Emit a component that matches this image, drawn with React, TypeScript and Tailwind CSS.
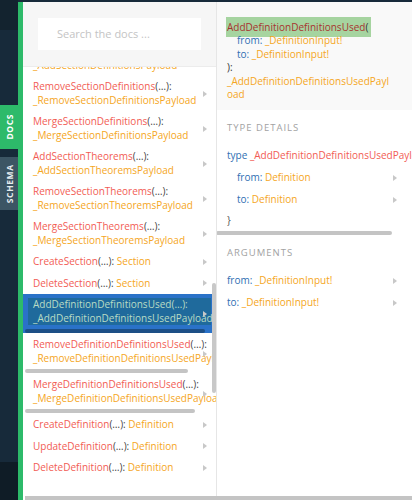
import type { ReactNode } from 'react';

type Item = {
  name: string;
  type: string;
  wrap?: boolean;
  bar?: number;
  selected?: boolean;
};

const items: Item[] = [
  { name: 'AddSectionDefinitions', type: '_AddSectionDefinitionsPayload', wrap: true },
  { name: 'RemoveSectionDefinitions', type: '_RemoveSectionDefinitionsPayload', wrap: true },
  { name: 'MergeSectionDefinitions', type: '_MergeSectionDefinitionsPayload', wrap: true },
  { name: 'AddSectionTheorems', type: '_AddSectionTheoremsPayload', wrap: true },
  { name: 'RemoveSectionTheorems', type: '_RemoveSectionTheoremsPayload', wrap: true },
  { name: 'MergeSectionTheorems', type: '_MergeSectionTheoremsPayload', wrap: true },
  { name: 'CreateSection', type: 'Section' },
  { name: 'DeleteSection', type: 'Section' },
  { name: 'AddDefinitionDefinitionsUsed', type: '_AddDefinitionDefinitionsUsedPayload', wrap: true, bar: 180, selected: true },
  { name: 'RemoveDefinitionDefinitionsUsed', type: '_RemoveDefinitionDefinitionsUsedPayload', wrap: true, bar: 163 },
  { name: 'MergeDefinitionDefinitionsUsed', type: '_MergeDefinitionDefinitionsUsedPayload', wrap: true, bar: 170 },
  { name: 'CreateDefinition', type: 'Definition' },
  { name: 'UpdateDefinition', type: 'Definition' },
  { name: 'DeleteDefinition', type: 'Definition' },
];

function Arrow({ className = '' }: { className?: string }) {
  return (
    <svg viewBox="0 0 4 6" className={`h-[6px] w-[4px] ${className}`}>
      <path d="M0 0 L4 3 L0 6 Z" fill="#c8c8c8" />
    </svg>
  );
}

function ListItem({ item }: { item: Item }) {
  const sel = item.selected;
  return (
    <div className={`relative ${sel ? 'bg-[#2a72c8]' : ''}`}>
      <div className="px-[10px] py-[4px]">
        <div className={`whitespace-nowrap ${sel ? 'mx-[-5px] bg-[#1f6a9c] px-[5px]' : ''}`}>
          <div>
            <span className={sel ? 'text-[#b9dcc4]' : 'text-[#f25c54]'}>{item.name}</span>
            <span className={sel ? 'text-[#b9dcc4]' : 'text-[#444]'}>(…):</span>
            {!item.wrap && <span className="text-[#f5a623]"> {item.type}</span>}
          </div>
          {item.wrap && <div className={sel ? 'text-[#b9dcc4]' : 'text-[#f5a623]'}>{item.type}</div>}
        </div>
      </div>
      <Arrow className="absolute right-[9px] top-1/2 -mt-[3px]" />
      {item.bar && (
        <div
          className={`mb-[1px] ml-[2px] h-[4px] rounded-full ${sel ? 'bg-[#1c4f86]' : 'bg-[#c4c4c4]'}`}
          style={{ width: item.bar }}
        />
      )}
    </div>
  );
}

function Line({ children, indent = false, arrow = false, short = false }: { children: ReactNode; indent?: boolean; arrow?: boolean; short?: boolean }) {
  return (
    <div className={`relative flex items-center whitespace-nowrap ${short ? 'h-[20px]' : 'h-[22px]'} ${indent ? 'pl-[10px]' : ''}`}>
      {children}
      {arrow && <Arrow className="absolute right-[5px] top-1/2 -mt-[3px]" />}
    </div>
  );
}

export default function App() {
  return (
    <div className="flex h-[500px] w-[412px] overflow-hidden bg-[#172a3a] font-['Open_Sans',sans-serif] text-[10px] leading-[13.5px]">
      {/* sidebar */}
      <div className="flex w-[18px] flex-col">
        <div className="h-[30px] bg-[#13232f]" />
        <div className="h-[75px]" />
        <div className="flex h-[44px] w-[20px] items-center justify-center bg-[#2dba6a]">
          <span className="-rotate-90 text-[8.5px] font-bold tracking-[0.6px] text-white">DOCS</span>
        </div>
        <div className="h-[8px]" />
        <div className="flex h-[53px] items-center justify-center bg-[#3c5564]">
          <span className="-rotate-90 text-[8.5px] font-bold tracking-[0.6px] text-[#e6ecef]">SCHEMA</span>
        </div>
        <div className="flex-1" />
        <div className="h-[38px] bg-[#0f1c26]" />
      </div>
      <div className="mt-[2px] w-[5px] bg-[#2dba6a]" />

      <div className="mt-[2px] flex flex-1 flex-col bg-white">
        <div className="flex min-h-0 flex-1">
          {/* left docs list */}
          <div className="relative flex w-[193px] flex-col">
            <div className="h-[65px] shrink-0 border-b border-[#ececec] bg-[#f6f6f6] px-[15px] pt-[16px]">
              <div className="flex h-[32px] items-center bg-white pl-[19px] text-[11px] text-[#c4c4c4]">
                Search the docs ...
              </div>
            </div>
            <div className="min-h-0 flex-1 overflow-hidden">
              <div className="-mt-[26px]">
                {items.map((it) => (
                  <ListItem key={it.name} item={it} />
                ))}
              </div>
            </div>
            <div className="absolute right-[0px] top-[281px] h-[110px] w-[4px] rounded-full bg-[#c8c8c8]" />
          </div>

          {/* right detail */}
          <div className="flex w-[196px] flex-col overflow-hidden border-l border-[#e6e6e6]">
            <div className="bg-[#f9f9f9] px-[10px] pb-[8px] pt-[15px]">
              <div className="whitespace-nowrap">
                <span className="-ml-[1px] inline-block h-[20px] bg-[#a6d4a0] pl-[1px] pr-[3px] leading-[20px] text-[#a8332f]">
                  AddDefinitionDefinitionsUsed<span className="text-[#333]">(</span>
                </span>
              </div>
              <div className="-mt-[3px] pl-[10px]">
                <span className="text-[#2f6fb3]">from: </span>
                <span className="text-[#f5a623]">_DefinitionInput!</span>
              </div>
              <div className="pl-[10px]">
                <span className="text-[#2f6fb3]">to: </span>
                <span className="text-[#f5a623]">_DefinitionInput!</span>
              </div>
              <div className="text-[#333]">):</div>
              <div className="w-[165px] break-all text-[#f5a623]">_AddDefinitionDefinitionsUsedPayload</div>
            </div>

            <div className="px-[10px] pt-[11px]">
              <div className="text-[9.5px] tracking-[1px] text-[#a2a2a2]">TYPE DETAILS</div>
              <div className="mt-[11px]">
                <Line>
                  <span className="text-[#2f6fb3]">type&nbsp;</span>
                  <span className="text-[#f25c54]">_AddDefinitionDefinitionsUsedPayload</span>
                  <span className="text-[#555]">&nbsp;{'{'}</span>
                </Line>
                <Line indent arrow>
                  <span className="text-[#2f6fb3]">from:&nbsp;</span>
                  <span className="text-[#f5a623]">Definition</span>
                </Line>
                <Line indent arrow>
                  <span className="text-[#2f6fb3]">to:&nbsp;</span>
                  <span className="text-[#f5a623]">Definition</span>
                </Line>
                <Line short>
                  <span className="text-[#555]">{'}'}</span>
                </Line>
              </div>
            </div>
            <div className="-ml-[1px] h-[4px] w-[176px] rounded-full bg-[#c4c4c4]" />

            <div className="px-[10px] pt-[11px]">
              <div className="text-[9.5px] tracking-[1px] text-[#a2a2a2]">ARGUMENTS</div>
              <div className="mt-[10px]">
                <Line arrow>
                  <span className="text-[#2f6fb3]">from:&nbsp;</span>
                  <span className="text-[#f5a623]">_DefinitionInput!</span>
                </Line>
                <Line arrow>
                  <span className="text-[#2f6fb3]">to:&nbsp;</span>
                  <span className="text-[#f5a623]">_DefinitionInput!</span>
                </Line>
              </div>
            </div>
          </div>
        </div>
        <div className="ml-[2px] h-[4px] shrink-0 bg-[#c4c4c4]" />
      </div>
    </div>
  );
}
